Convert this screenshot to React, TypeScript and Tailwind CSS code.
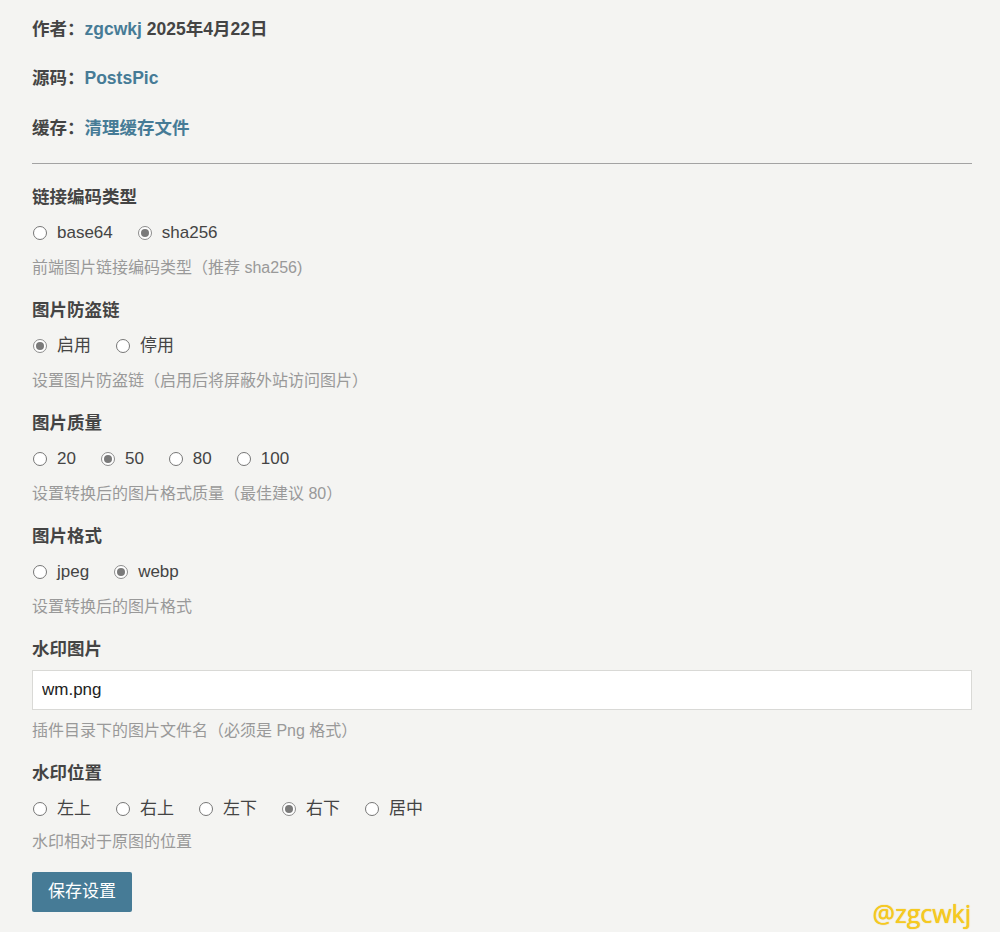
import { useState } from "react";

const font = "font-['Liberation_Sans','Noto_Sans_CJK_SC',sans-serif]";

type Field = {
  label: string;
  options: string[];
  value: string;
  note: string;
};

const fields: Field[] = [
  { label: "链接编码类型", options: ["base64", "sha256"], value: "sha256", note: "前端图片链接编码类型（推荐 sha256)" },
  { label: "图片防盗链", options: ["启用", "停用"], value: "启用", note: "设置图片防盗链（启用后将屏蔽外站访问图片）" },
  { label: "图片质量", options: ["20", "50", "80", "100"], value: "50", note: "设置转换后的图片格式质量（最佳建议 80）" },
  { label: "图片格式", options: ["jpeg", "webp"], value: "webp", note: "设置转换后的图片格式" },
];

function Radio({ label, checked, onSelect }: { label: string; checked: boolean; onSelect: () => void }) {
  return (
    <label className="mr-[24px] flex cursor-pointer items-center" onClick={onSelect}>
      <span
        className={`ml-px flex h-[14px] w-[14px] items-center justify-center rounded-full border bg-white ${
          checked ? "border-[#8c8c8c]" : "border-[#767676]"
        }`}
      >
        {checked && <span className="h-[8px] w-[8px] rounded-full bg-[#7a7a7a]" />}
      </span>
      <span className="ml-[10px]">{label}</span>
    </label>
  );
}

function RadioField({ field }: { field: Field }) {
  const [value, setValue] = useState(field.value);
  return (
    <li className="mt-[18px] first:mt-0">
      <p className="text-[17.5px] font-bold leading-[24px] text-[#444]">{field.label}</p>
      <div className="mt-[12px] flex h-[24px] items-center text-[17px] text-[#444]">
        {field.options.map((o) => (
          <Radio key={o} label={o} checked={value === o} onSelect={() => setValue(o)} />
        ))}
      </div>
      <p className="mt-[11px] text-[16px] leading-[24px] text-[#999]">{field.note}</p>
    </li>
  );
}

export default function App() {
  const [pos, setPos] = useState("右下");
  return (
    <div className={`relative min-h-[932px] bg-[#f4f4f2] pt-[17px] pr-[28px] pl-[32px] ${font}`}>
      <div className="text-[17.5px] font-bold leading-[24px] text-[#444]">
        <p>
          作者：<a className="text-[#467b96]">zgcwkj</a> 2025年4月22日
        </p>
        <p className="mt-[25px]">
          源码：<a className="text-[#467b96]">PostsPic</a>
        </p>
        <p className="mt-[26px]">
          缓存：<a className="text-[#467b96]">清理缓存文件</a>
        </p>
      </div>

      <hr className="mt-[23px] border-0 border-t border-[#a3a3a3]" />

      <ul className="mt-[21px]">
        {fields.map((f) => (
          <RadioField key={f.label} field={f} />
        ))}

        <li className="mt-[18px]">
          <p className="text-[17.5px] font-bold leading-[24px] text-[#444]">水印图片</p>
          <input
            defaultValue="wm.png"
            className="mt-[9px] block h-[40px] w-full border border-[#d9d9d6] bg-white px-[9px] text-[17px] text-[#222] outline-none"
          />
          <p className="mt-[9px] text-[16px] leading-[24px] text-[#999]">插件目录下的图片文件名（必须是 Png 格式）</p>
        </li>

        <li className="mt-[18px]">
          <p className="text-[17.5px] font-bold leading-[24px] text-[#444]">水印位置</p>
          <div className="mt-[12px] flex h-[24px] items-center text-[17px] text-[#444]">
            {["左上", "右上", "左下", "右下", "居中"].map((o) => (
              <Radio key={o} label={o} checked={pos === o} onSelect={() => setPos(o)} />
            ))}
          </div>
          <p className="mt-[9px] text-[16px] leading-[24px] text-[#999]">水印相对于原图的位置</p>
        </li>
      </ul>

      <button className="mt-[18px] h-[40px] w-[100px] rounded-[2px] bg-[#467b96] text-[17px] text-white">
        保存设置
      </button>

      <span className="absolute right-[29px] bottom-[6px] font-['Open_Sans',sans-serif] text-[25px] leading-none text-[#f7cb1f] [text-shadow:0_0_1px_#e0a800]">
        @zgcwkj
      </span>
    </div>
  );
}
